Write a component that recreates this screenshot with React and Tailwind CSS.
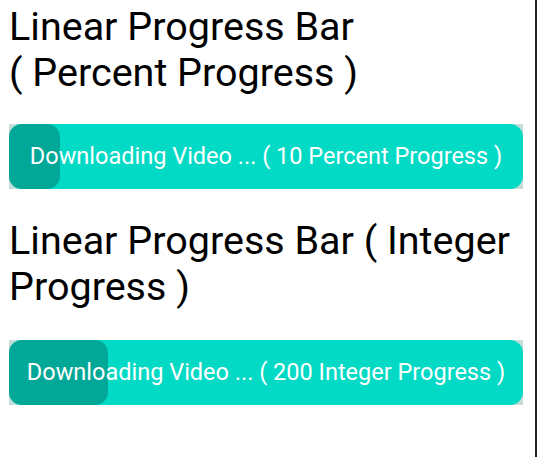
import React from "react";

const font = { fontFamily: "Roboto, 'Noto Sans', sans-serif" };

function ProgressBar({ label, fill }) {
  return (
    <div className="relative h-[65px] w-[514px] bg-[#c6dcd8]">
      <div className="absolute inset-0 rounded-[13px] bg-[#03dac5]" />
      <div
        className="absolute left-0 top-0 bottom-0 rounded-[13px] bg-[#02a897]"
        style={{ width: fill }}
      />
      <div className="relative flex h-full items-center justify-center text-[23.5px] text-white">
        {label}
      </div>
    </div>
  );
}

export default function App() {
  return (
    <div
      className="h-[457px] w-[537px] border-r-2 border-[#222] bg-white pl-[9px]"
      style={font}
    >
      <h1 className="w-[514px] pt-[4px] text-[39.5px] leading-[46px] text-black">
        Linear Progress Bar
        <br />( Percent Progress )
      </h1>
      <div className="mt-[28px]">
        <ProgressBar
          label="Downloading Video ... ( 10 Percent Progress )"
          fill={51}
        />
      </div>
      <h1 className="mt-[29px] w-[514px] text-[39.5px] leading-[46px] text-black">
        Linear Progress Bar ( Integer Progress )
      </h1>
      <div className="mt-[30px]">
        <ProgressBar
          label="Downloading Video ... ( 200 Integer Progress )"
          fill={99}
        />
      </div>
    </div>
  );
}
